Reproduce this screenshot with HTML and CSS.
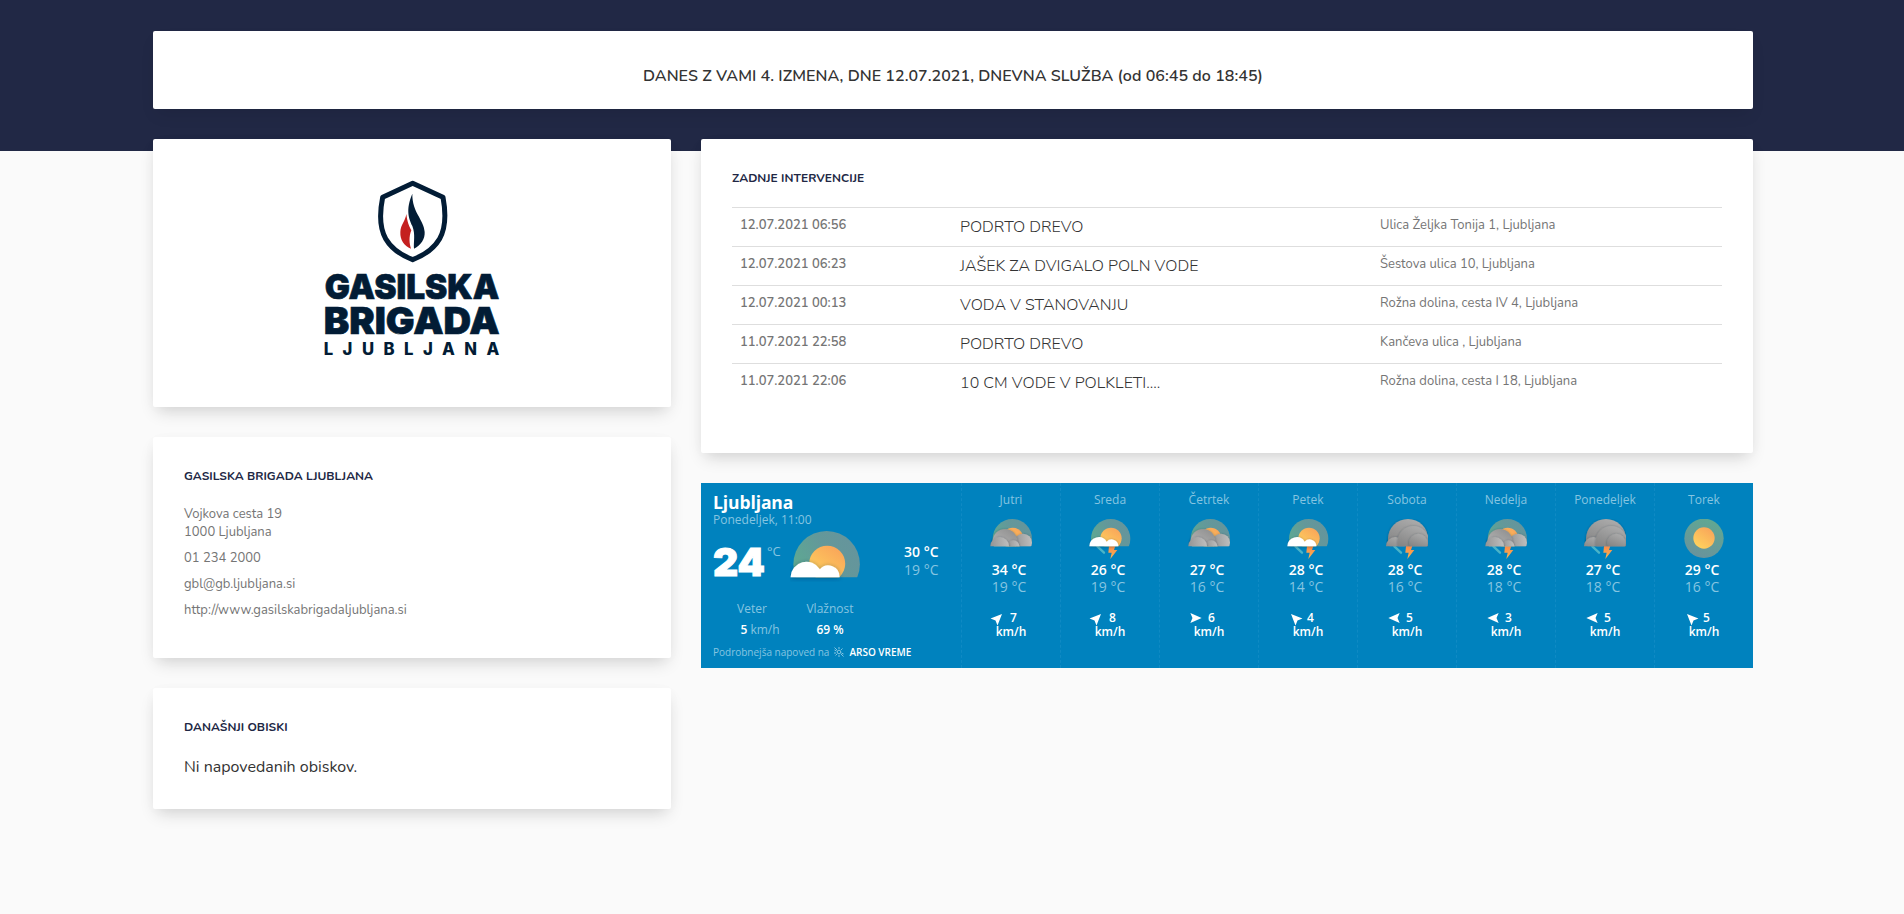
FILE: index.html
```html
<!DOCTYPE html>
<html lang="sl">
<head>
<meta charset="utf-8">
<title>Gasilska brigada Ljubljana</title>
<link rel="stylesheet" href="styles.css">
</head>
<body>
<svg class="defs" width="0" height="0" aria-hidden="true">
  <defs>
    <linearGradient id="sunFill" x1="0" y1="1" x2="0.7" y2="0"><stop offset="0" stop-color="#ffd95e"/><stop offset="1" stop-color="#f9a65a"/></linearGradient>
    <linearGradient id="haloFill" x1="0" y1="0.8" x2="1" y2="0.2"><stop offset="0" stop-color="#5cae90"/><stop offset="0.6" stop-color="#63989a"/><stop offset="1" stop-color="#66949c"/></linearGradient>
    <linearGradient id="haloFull" x1="0.3" y1="1" x2="0.7" y2="0"><stop offset="0" stop-color="#6a929c"/><stop offset="1" stop-color="#60a892"/></linearGradient>
    <linearGradient id="cloudGrey" x1="0.2" y1="0.9" x2="0.8" y2="0"><stop offset="0" stop-color="#bababa"/><stop offset="1" stop-color="#909090"/></linearGradient>
    <linearGradient id="cloudLight" x1="0" y1="0.5" x2="1" y2="0.4"><stop offset="0" stop-color="#949494"/><stop offset="1" stop-color="#bebebe"/></linearGradient>
    <linearGradient id="cloudDark" x1="0.7" y1="0" x2="0.3" y2="1"><stop offset="0" stop-color="#acacac"/><stop offset="1" stop-color="#787878"/></linearGradient>
    <linearGradient id="boltFill" x1="0" y1="0" x2="0" y2="1"><stop offset="0" stop-color="#f88a4a"/><stop offset="1" stop-color="#fbb653"/></linearGradient>
    <filter id="soft" x="-20%" y="-20%" width="140%" height="150%"><feDropShadow dx="0" dy="1.5" stdDeviation="3.5" flood-color="#002a3c" flood-opacity="0.45"/></filter>
    <clipPath id="horizon"><rect x="-10" y="-10" width="150" height="92"/></clipPath>
    <symbol id="bolt" viewBox="0 0 126 126"><path d="M25 82l20 19" stroke="#4ab4c8" stroke-width="7" stroke-linecap="round"/><path d="M60 81h19l-4 12h10l-21 27 4-19h-10z" fill="url(#boltFill)"/></symbol>
    <symbol id="sunCloud" viewBox="0 0 126 126">
      <g clip-path="url(#horizon)"><circle cx="65" cy="59" r="59" fill="url(#haloFill)"/><circle cx="66" cy="58" r="32" fill="url(#sunFill)"/></g>
      <path filter="url(#soft)" d="M1 82a28 28 0 0 1 52-14a20 20 0 0 1 35 14z" fill="#fff"/>
    </symbol>
    <symbol id="cloudy" viewBox="0 0 126 126">
      <g clip-path="url(#horizon)"><circle cx="67" cy="59" r="59" fill="url(#haloFill)"/><circle cx="68" cy="58" r="32" fill="url(#sunFill)"/>
      <circle filter="url(#soft)" cx="99" cy="71" r="27" fill="url(#cloudLight)"/><circle filter="url(#soft)" cx="45" cy="67" r="37" fill="url(#cloudGrey)"/><circle filter="url(#soft)" cx="70" cy="82" r="18" fill="url(#cloudLight)"/><circle filter="url(#soft)" cx="29" cy="82" r="28" fill="url(#cloudLight)"/></g>
    </symbol>
    <symbol id="overcast" viewBox="0 0 126 126">
      <g clip-path="url(#horizon)"><circle filter="url(#soft)" cx="66" cy="60" r="60" fill="url(#cloudDark)"/><circle filter="url(#soft)" cx="28" cy="82" r="28" fill="url(#cloudDark)"/><circle filter="url(#soft)" cx="82" cy="68" r="47" fill="url(#cloudDark)"/><circle filter="url(#soft)" cx="97" cy="72" r="28" fill="url(#cloudDark)"/></g>
    </symbol>
    <symbol id="sunny" viewBox="0 0 126 126"><circle cx="63" cy="58" r="59" fill="url(#haloFull)"/><circle cx="63" cy="57" r="32" fill="url(#sunFill)"/></symbol>
    <symbol id="arrow" viewBox="-17 -17 34 34"><path d="M16 0L-16 14L-10 0L-16 -14z" fill="#fff"/></symbol>
  </defs>
</svg>

<div class="page">
  <header class="card notice">DANES Z VAMI 4. IZMENA, DNE 12.07.2021, DNEVNA SLUŽBA (od 06:45 do 18:45)</header>
  <main class="columns">
    <section class="side">
      <div class="card logo-card">
        <svg width="220" height="210" viewBox="6 0 660 630" role="img">
          <path d="M338 70L248 112Q232 192 257 236Q281 277 338 299Q395 277 419 236Q444 192 429 112z" fill="none" stroke="#021c35" stroke-width="15" stroke-linejoin="round"/>
          <path d="M337 101C316 150 327 176 337 198C347 224 340 246 342 266C364 255 375 236 374 216C372 178 336 158 337 101z" fill="#021c35"/>
          <path d="M319 162C322 186 326 196 334 211C326 232 328 250 333 266C312 257 300 240 301 216C302 194 316 184 319 162z" fill="#c4201f"/>
          <g class="logo-text">
            <text x="74" y="418" font-size="104" stroke-width="2" textLength="524" lengthAdjust="spacingAndGlyphs">GASILSKA</text>
            <text x="71" y="521" font-size="109" stroke-width="2" textLength="528" lengthAdjust="spacingAndGlyphs">BRIGADA</text>
            <text class="logo-sub" x="71" y="586" font-size="50" textLength="527">LJUBLJANA</text>
          </g>
        </svg>
      </div>
      <div class="card contact">
        <h2>GASILSKA BRIGADA LJUBLJANA</h2>
        <p>Vojkova cesta 19<br>1000 Ljubljana</p>
        <p>01 234 2000</p>
        <p>gbl@gb.ljubljana.si</p>
        <p>http://www.gasilskabrigadaljubljana.si</p>
      </div>
      <div class="card visits">
        <h2>DANAŠNJI OBISKI</h2>
        <p>Ni napovedanih obiskov.</p>
      </div>
    </section>
    <section class="content">
      <div class="card interventions">
        <h2>ZADNJE INTERVENCIJE</h2>
        <div class="row"><span class="date">12.07.2021 06:56</span><span class="event">PODRTO DREVO</span><span class="place">Ulica Željka Tonija 1, Ljubljana</span></div>
        <div class="row"><span class="date">12.07.2021 06:23</span><span class="event">JAŠEK ZA DVIGALO POLN VODE</span><span class="place">Šestova ulica 10, Ljubljana</span></div>
        <div class="row"><span class="date">12.07.2021 00:13</span><span class="event">VODA V STANOVANJU</span><span class="place">Rožna dolina, cesta IV 4, Ljubljana</span></div>
        <div class="row"><span class="date">11.07.2021 22:58</span><span class="event">PODRTO DREVO</span><span class="place">Kančeva ulica , Ljubljana</span></div>
        <div class="row"><span class="date">11.07.2021 22:06</span><span class="event">10 CM VODE V POLKLETI....</span><span class="place">Rožna dolina, cesta I 18, Ljubljana</span></div>
      </div>
      <div class="weather">
        <div class="now">
          <div class="city">Ljubljana</div>
          <div class="time">Ponedeljek, 11:00</div>
          <div class="now-main">
            <span class="temp">24</span><span class="unit">°C</span>
            <svg class="now-icon" width="71" height="71"><use href="#sunCloud"/></svg>
            <div class="range"><b>30 °C</b><span>19 °C</span></div>
          </div>
          <div class="details">
            <div><span>Veter</span><span class="val wind-val"><b>5</b> km/h</span></div>
            <div><span>Vlažnost</span><span class="val"><b>69 %</b></span></div>
          </div>
          <div class="source"><span>Podrobnejša napoved na</span>
            <svg width="10" height="10" viewBox="0 0 20 20" fill="none" stroke="#a5d5ea" stroke-width="1.6"><circle cx="10" cy="10" r="3.6"/><path d="M10 0v4M10 16v4M1 6l4 2M15 12l4 2M3 17l3-3M14 6l3-3M1 1l5 5M14 14l5 5M0 12h4"/></svg>
            <b>ARSO VREME</b></div>
        </div>
        <div class="day"><span class="name">Jutri</span><svg class="icon" width="42" height="42"><use href="#cloudy"/></svg><b class="hi">34 °C</b><span class="lo">19 °C</span><span class="wind"><svg class="ne" width="12" height="12"><use href="#arrow"/></svg>7</span><span class="kmh">km/h</span></div>
        <div class="day"><span class="name">Sreda</span><svg class="icon" width="42" height="42"><use href="#bolt"/><use href="#sunCloud"/></svg><b class="hi">26 °C</b><span class="lo">19 °C</span><span class="wind"><svg class="ne" width="12" height="12"><use href="#arrow"/></svg>8</span><span class="kmh">km/h</span></div>
        <div class="day"><span class="name">Četrtek</span><svg class="icon" width="42" height="42"><use href="#cloudy"/></svg><b class="hi">27 °C</b><span class="lo">16 °C</span><span class="wind"><svg class="e" width="12" height="12"><use href="#arrow"/></svg>6</span><span class="kmh">km/h</span></div>
        <div class="day"><span class="name">Petek</span><svg class="icon" width="42" height="42"><use href="#bolt"/><use href="#sunCloud"/></svg><b class="hi">28 °C</b><span class="lo">14 °C</span><span class="wind"><svg class="nw" width="12" height="12"><use href="#arrow"/></svg>4</span><span class="kmh">km/h</span></div>
        <div class="day"><span class="name">Sobota</span><svg class="icon" width="42" height="42"><use href="#bolt"/><use href="#overcast"/></svg><b class="hi">28 °C</b><span class="lo">16 °C</span><span class="wind"><svg class="w" width="12" height="12"><use href="#arrow"/></svg>5</span><span class="kmh">km/h</span></div>
        <div class="day"><span class="name">Nedelja</span><svg class="icon" width="42" height="42"><use href="#bolt"/><use href="#cloudy"/></svg><b class="hi">28 °C</b><span class="lo">18 °C</span><span class="wind"><svg class="w" width="12" height="12"><use href="#arrow"/></svg>3</span><span class="kmh">km/h</span></div>
        <div class="day"><span class="name">Ponedeljek</span><svg class="icon" width="42" height="42"><use href="#bolt"/><use href="#overcast"/></svg><b class="hi">27 °C</b><span class="lo">18 °C</span><span class="wind"><svg class="w" width="12" height="12"><use href="#arrow"/></svg>5</span><span class="kmh">km/h</span></div>
        <div class="day"><span class="name">Torek</span><svg class="icon" width="42" height="42"><use href="#sunny"/></svg><b class="hi">29 °C</b><span class="lo">16 °C</span><span class="wind"><svg class="nw" width="12" height="12"><use href="#arrow"/></svg>5</span><span class="kmh">km/h</span></div>
      </div>
    </section>
  </main>
</div>
</body>
</html>
```
FILE: styles.css
```css
* { box-sizing: border-box; }
body {
  margin: 0;
  height: 914px;
  overflow: hidden;
  background: linear-gradient(#212845 151px, #fafafa 151px);
  font-family: Nunito, Lato, "Noto Sans", sans-serif;
  font-size: 16px;
  color: #333;
}
.defs { position: absolute; }
svg { display: block; flex: none; overflow: visible; }
.page { width: 1600px; margin-left: 153px; padding-top: 31px; }
.card {
  background: #fff;
  border-radius: 2px;
  box-shadow: 0 8px 16px -4px rgba(0,0,0,.16), 0 2px 16px rgba(0,0,0,.02);
}
.notice {
  height: 78px;
  line-height: 91px;
  text-align: center;
  font-weight: 650;
  letter-spacing: .04px;
  box-shadow: 0 8px 16px -4px rgba(0,0,0,.1);
}
.columns { display: grid; grid-template-columns: 518px 1052px; gap: 30px; margin-top: 30px; align-items: start; }
.side, .content { display: flex; flex-direction: column; gap: 30px; }
h2 { margin: 0; font-size: 12px; line-height: 17px; font-weight: 680; letter-spacing: .03px; color: #212744; }
p { margin: 0; }
.logo-card { height: 268px; padding-top: 21px; display: flex; justify-content: center; }
.logo-text { font-family: Inter, sans-serif; font-weight: 900; fill: #021c35; stroke: #021c35; stroke-width: 0; }
.logo-sub { font-weight: 800; }
.contact { height: 221px; padding: 31px; font-size: 13px; line-height: 18px; color: #757575; }
.contact h2 { margin-bottom: 20px; }
.contact p { margin-bottom: 8px; }
.visits { height: 121px; padding: 31px; }
.visits p { margin-top: 19px; line-height: 24px; }

.interventions { height: 314px; padding: 31px 31px 0; }
.interventions h2 { margin-bottom: 20px; }
.row { display: grid; grid-template-columns: 220px 420px 1fr; height: 39px; padding-left: 8px; border-top: 1px solid #dedede; font-size: 13px; line-height: 35px; color: #757575; }
.date { font-weight: 650; }
.event { font-size: 16px; line-height: 38px; font-weight: 350; letter-spacing: .04px; color: #333; }

.weather {
  height: 185px;
  display: grid;
  grid-template-columns: 260px repeat(8, 99px);
  background: #0082be;
  color: #86c5e1;
  font-family: "Open Sans", "Noto Sans", sans-serif;
  font-size: 12px;
}
.weather b { color: #fff; font-weight: 550; }
.now { padding: 9px 0 0 12px; }
.city { font-size: 17.5px; line-height: 20px; font-weight: 680; letter-spacing: -.1px; color: #fff; }
.time { line-height: 15px; }
.now-main { display: flex; height: 57px; margin-top: 3px; }
.temp { width: 54px; font-family: Inter, sans-serif; font-weight: 900; font-size: 39px; line-height: 64px; letter-spacing: -.1px; color: #fff; -webkit-text-stroke: 1px #fff; }
.unit { width: 23px; font-size: 13px; line-height: 43px; }
.now-icon { margin-top: 1px; }
.range { margin-left: 43px; padding-top: 13px; display: flex; flex-direction: column; font-size: 14px; line-height: 18px; }
.details { display: flex; height: 47px; margin-top: 11px; text-align: center; }
.details div { width: 78px; display: flex; flex-direction: column; line-height: 21px; }
.wind-val { padding-left: 16px; }
.source { display: flex; align-items: center; gap: 5px; font-size: 10px; line-height: 14px; }
.source b { font-weight: 600; }
.day { border-left: 1px dashed rgba(60,165,215,.25); display: flex; flex-direction: column; align-items: center; padding-top: 9px; }
.name { line-height: 16px; }
.icon { margin: 11px 0 0; }
.day .hi, .lo { font-size: 14px; line-height: 17px; margin-right: 4px; }
.wind { display: flex; align-items: center; gap: 6px; width: 38px; margin-top: 15px; line-height: 15px; color: #fff; font-weight: 550; }
.kmh { color: #fff; font-weight: 550; line-height: 13px; }
.ne { transform: rotate(-45deg); }
.nw { transform: rotate(-135deg); }
.w { transform: rotate(180deg); }
```
